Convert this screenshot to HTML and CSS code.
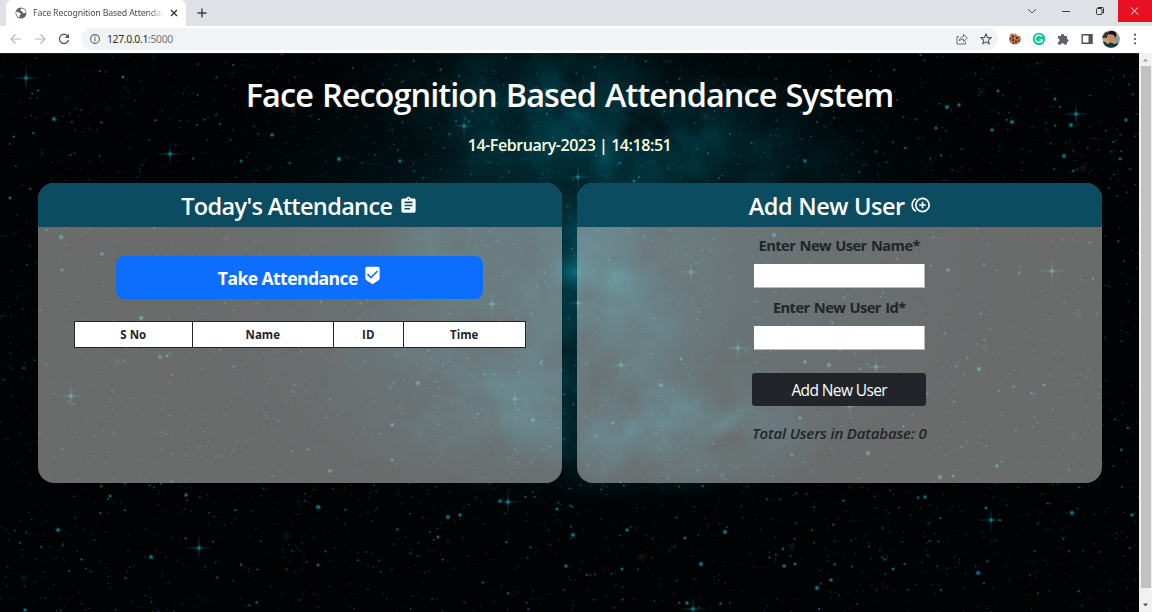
FILE: index.html
```html
<!DOCTYPE html>
<html lang="en">
<head>
<meta charset="utf-8">
<title>Face Recognition Based Attendance System</title>
<link rel="stylesheet" href="styles.css">
</head>
<body>
<div class="browser">
  <div class="tabstrip">
    <div class="tab">
      <svg class="globe" viewBox="0 0 24 24"><circle cx="12" cy="12" r="11" fill="#5f6368"/><path fill="#fff" d="M3 9c3 0 4 3 7 3s2 3 0 4 0 4-1 5C5 20 2 16 2.500 11zM13 3c-1 2-3 2-2 4s4 1 4 3 2 3 4 2 2-1 3 0c0-5-4-9-9-9z"/></svg>
      <span class="tab-title">Face Recognition Based Attendance System</span>
      <svg class="tab-close" viewBox="0 0 8 8"><path d="M1 1l6 6M7 1l-6 6" stroke="#303134" stroke-width="1.300"/></svg>
    </div>
    <svg class="new-tab" viewBox="0 0 10 10"><path d="M5 .5v9M.5 5h9" stroke="#3c4043" stroke-width="1.400"/></svg>
    <div class="window-controls">
      <svg viewBox="0 0 34 22"><path d="M12 9l4 4 4-4" fill="none" stroke="#555" /></svg>
      <svg viewBox="0 0 34 22"><path d="M12 11.500h8" stroke="#444"/></svg>
      <svg viewBox="0 0 34 22"><rect x="12.500" y="8.500" width="5.500" height="6" rx="1" fill="none" stroke="#333"/><path d="M14 8V7.500h4.500q1 0 1 1V13H18.500" fill="none" stroke="#333"/></svg>
      <svg class="close-window" viewBox="0 0 34 22"><path d="M13 7.500l7 7M20 7.500l-7 7" stroke="#fff"/></svg>
    </div>
  </div>
  <div class="toolbar">
    <div class="nav">
      <svg viewBox="0 0 12 12"><path d="M11 6H1.500M5.500 1.500L1 6l4.500 4.500" fill="none" stroke="#b4b6b9" stroke-width="1.100"/></svg>
      <svg viewBox="0 0 12 12"><path d="M1 6h9.500M6.500 1.500L11 6l-4.500 4.500" fill="none" stroke="#b4b6b9" stroke-width="1.100"/></svg>
      <svg viewBox="0 0 12 12"><path d="M10 3.500A4.600 4.600 0 1 0 10.500 7" fill="none" stroke="#505357" stroke-width="1.300"/><path d="M11 .8v4.200H6.800z" fill="#505357"/></svg>
    </div>
    <div class="omnibox">
      <svg class="info" viewBox="0 0 12 12"><circle cx="6" cy="6" r="4.400" fill="none" stroke="#5f6368" stroke-width="1.100"/><path d="M6 5.300v3M6 3.300v1.100" stroke="#5f6368" stroke-width="1.100"/></svg>
      <span class="url">127.0.0.1<span class="port">:5000</span></span>
      <svg class="share" viewBox="0 0 12 12"><path d="M3 3.500H1v7.500h8.500V8.500M3.300 8c.3-3 1.700-4.200 4.200-4.200V1.500L11.300 5 7.500 8.400V6.200C5.500 6.200 4.400 6.600 3.300 8z" fill="none" stroke="#5f6368" stroke-width=".9"/></svg>
      <svg class="star" viewBox="0 0 12 12"><path d="M6 1l1.500 3.400 3.600.3-2.700 2.400.8 3.600L6 8.800l-3.200 1.900.8-3.600L.9 4.700l3.600-.3z" fill="none" stroke="#505357" stroke-width="1.100"/></svg>
    </div>
    <div class="extensions">
      <svg viewBox="0 0 14 14"><path d="M4 1l2 1.500L8 1.500l1 2 3 .5 1 3a6 6 0 1 1-12-1L2 5l-.5-1.500z" fill="#b97549"/><g fill="#2d1b16"><circle cx="5" cy="4.500" r="1"/><circle cx="9" cy="6" r="1"/><circle cx="5" cy="8" r="1"/><circle cx="8" cy="9.500" r="1"/><circle cx="11" cy="9" r=".8"/><circle cx="2.500" cy="6.500" r=".7"/><circle cx="5.500" cy="11.300" r=".8"/></g></svg>
      <svg viewBox="0 0 14 14"><circle cx="7" cy="7" r="6.200" fill="#15c39a"/><path d="M9.800 4.600A3.600 3.600 0 1 0 10.300 8H7.500M10.300 8v2.300" fill="none" stroke="#fff" stroke-width="1.200"/></svg>
      <svg viewBox="0 0 14 14"><path d="M2 4h3a1.700 1.700 0 1 1 3.300 0H11v3a1.600 1.600 0 1 1 0 3.200V12.500H8.200a1.700 1.700 0 0 0-3.300 0H2V9.800a1.600 1.600 0 0 0 0-3.200z" fill="#5f6368"/></svg>
      <svg viewBox="0 0 14 14"><path d="M2.200 2.700h9.600v8.600H2.200z" fill="none" stroke="#505357" stroke-width="1.400"/><path d="M8.500 2h4v10h-4z" fill="#505357"/></svg>
      <svg class="avatar" viewBox="0 0 18 18"><clipPath id="face"><circle cx="9" cy="9" r="8.700"/></clipPath><g clip-path="url(#face)"><path fill="#b9a08c" d="M0 0h18v18H0z"/><path fill="#363831" d="M0 0h5v8H0z"/><path fill="#7f9c9a" d="M13 7h5v8h-5z"/><path fill="#0e3940" d="M1 12l6-1 5 3 5-1v5H1z"/><path fill="#c68a66" d="M6 5h6l1 4-2 3-3 1-2-4z"/><path fill="#171518" d="M5 7c-1-6 3-6 6-6s5 4 2 7l-1-3-6-1z"/><path fill="#df9e6b" d="M3 11l3-1 2 3-3 1z"/></g></svg>
      <svg viewBox="0 0 14 14"><g fill="#505357"><circle cx="7" cy="2.700" r="1.100"/><circle cx="7" cy="7" r="1.100"/><circle cx="7" cy="11.300" r="1.100"/></g></svg>
    </div>
  </div>
  <div class="viewport">
    <main class="page">
      <svg class="sky" id="sky" viewBox="0 0 1139 558" preserveAspectRatio="none">
        <defs>
          <radialGradient id="glow"><stop offset="0" stop-color="#0a7589"/><stop offset=".5" stop-color="#07505e" stop-opacity=".6"/><stop offset="1" stop-color="#02282f" stop-opacity="0"/></radialGradient>
          <radialGradient id="dot"><stop offset="0" stop-color="#2cb3cd"/><stop offset=".4" stop-color="#148ba3" stop-opacity=".7"/><stop offset="1" stop-color="#0a6577" stop-opacity="0"/></radialGradient>
          <filter id="cloud" x="0" y="0" width="100%" height="100%" filterUnits="userSpaceOnUse">
            <feTurbulence type="fractalNoise" baseFrequency=".016" numOctaves="6" seed="21" result="noise"/>
            <feColorMatrix in="noise" type="matrix" values="0 0 0 0 0  0 0 0 0 0  0 0 0 0 0  2 0 0 0 -.4" result="mask"/>
            <feComposite in="SourceGraphic" in2="mask" operator="in"/>
          </filter>
        </defs>
        <rect width="1139" height="558" fill="#000203"/>
        <ellipse cx="590" cy="200" rx="420" ry="290" fill="url(#glow)" opacity=".32"/>
        <g filter="url(#cloud)">
          <ellipse cx="545" cy="60" rx="190" ry="170" fill="url(#glow)" opacity=".5"/>
          <ellipse cx="690" cy="95" rx="210" ry="85" fill="url(#glow)" opacity=".45"/>
          <ellipse cx="605" cy="235" rx="140" ry="140" fill="url(#glow)" opacity=".8"/>
          <ellipse cx="640" cy="370" rx="220" ry="80" fill="url(#glow)" opacity=".8"/>
          <ellipse cx="480" cy="330" rx="180" ry="120" fill="url(#glow)" opacity=".5"/>
          <ellipse cx="455" cy="200" rx="90" ry="80" fill="url(#glow)" opacity=".5"/>
        </g>
        <ellipse cx="574" cy="218" rx="36" ry="30" fill="url(#glow)" opacity=".85"/>
        <ellipse cx="605" cy="100" rx="26" ry="50" fill="url(#glow)" opacity=".5"/>
        <ellipse cx="580" cy="62" rx="35" ry="20" fill="url(#glow)" opacity=".4" transform="rotate(35 580 62)"/>
        <ellipse cx="725" cy="370" rx="45" ry="15" fill="url(#glow)" opacity=".45" transform="rotate(-35 725 370)"/>
      </svg>
      <div class="content">
        <h1 class="title">Face Recognition Based Attendance System</h1>
        <p class="clock">14-February-2023 | 14:18:51</p>
        <div class="cards">
          <section class="card">
            <h2 class="card-head"><span class="head-today">Today's Attendance</span>
              <svg class="clip-icon" viewBox="0 0 24 24"><path fill="#fff" d="M19 3h-4.200C14.400 1.800 13.300 1 12 1s-2.400.8-2.800 2H5a2 2 0 0 0-2 2v14c0 1.100.9 2 2 2h14a2 2 0 0 0 2-2V5a2 2 0 0 0-2-2zm-7 0a1 1 0 1 1 0 2 1 1 0 0 1 0-2zm2 14H7v-2h7v2zm3-4H7v-2h10v2zm0-4H7V7h10v2z"/></svg></h2>
            <div class="card-body">
              <button class="take"><span class="take-text">Take Attendance</span>
                <svg class="check-icon" viewBox="0 0 24 24"><path fill="#fff" d="M19 1H5a2 2 0 0 0-2 2v12.900c0 .7.400 1.300.9 1.700L12 23l8.100-5.400c.5-.4.900-1 .9-1.700V3a2 2 0 0 0-2-2zm-9 15l-5-5 1.400-1.400 3.600 3.600 7.600-7.600L19 7l-9 9z"/></svg></button>
              <table class="log"><thead><tr><th class="c-no">S No</th><th class="c-name">Name</th><th class="c-id">ID</th><th class="c-time">Time</th></tr></thead></table>
            </div>
          </section>
          <section class="card">
            <h2 class="card-head"><span class="head-add">Add New User</span>
              <svg class="add-icon" viewBox="0 0 24 24"><g fill="none" stroke="#fff" stroke-width="2"><circle cx="15" cy="12" r="8"/><path d="M15 8v8M11 12h8M7 4.400A8.800 8.800 0 0 0 7 19.600"/></g></svg></h2>
            <form class="card-body form">
              <label class="label l-name" for="n">Enter New User Name*</label>
              <input class="field" id="n" type="text">
              <label class="label l-id" for="i">Enter New User Id*</label>
              <input class="field" id="i" type="text">
              <button class="submit" type="button"><span>Add New User</span></button>
              <p class="total">Total Users in Database: 0</p>
            </form>
          </section>
        </div>
      </div>
    </main>
    <div class="scrollbar">
      <svg class="arrow" viewBox="0 0 13 12"><path d="M4 8l2.500-3L9 8z" fill="#a0a0a0"/></svg>
      <div class="thumb"></div>
      <svg class="arrow-down" viewBox="0 0 13 24"><path d="M4 15.500l2.500 3 2.500-3z" fill="#505050"/></svg>
    </div>
  </div>
</div>
<script src="sky.js"></script>
</body>
</html>
```
FILE: styles.css
```css
* { box-sizing: border-box; }
body { margin: 0; background: #000; font-family: "Open Sans", "Noto Sans", sans-serif; overflow: hidden; }
h1, h2, p { margin: 0; }
svg { display: block; flex: none; }
.browser { width: 1152px; height: 612px; display: flex; flex-direction: column; }

.tabstrip { height: 26px; background: #dee1e6; display: flex; align-items: flex-start; padding-left: 6px; }
.tab { width: 180px; height: 26px; background: #fff; border-radius: 6px 6px 0 0; display: flex; align-items: center; padding: 0 8px 1px 9px; }
.globe { width: 12px; height: 12px; }
.tab-title { width: 131px; margin-left: 6px; overflow: hidden; white-space: nowrap; font-family: "Noto Sans", sans-serif; font-size: 8.8px; letter-spacing: -0.17px; color: #484b4f; -webkit-mask-image: linear-gradient(90deg, #000 88%, transparent); mask-image: linear-gradient(90deg, #000 88%, transparent); }
.tab-close { width: 8px; height: 8px; margin-left: 6px; }
.new-tab { width: 10px; height: 10px; margin: 8px 0 0 11px; }
.window-controls { margin-left: auto; display: flex; }
.window-controls svg { width: 34px; height: 22px; }
.window-controls .close-window { background: #e81123; }

.toolbar { height: 27px; background: #fff; display: flex; align-items: center; padding: 0 0 2px 10px; }
.nav { display: flex; gap: 12px; width: 71px; }
.nav svg { width: 12px; height: 12px; }
.omnibox { width: 917px; height: 22px; border-radius: 11px; background: #f1f3f4; display: flex; align-items: center; padding: 0 6px 0 8px; }
.info { width: 12px; height: 12px; }
.url { margin-left: 6px; font-family: "Noto Sans", sans-serif; font-size: 10.4px; letter-spacing: -0.33px; color: #2b2d31; }
.port { color: #73767b; }
.share { width: 12px; height: 12px; margin-left: auto; }
.star { width: 12px; height: 12px; margin-left: 12px; }
.extensions { display: flex; align-items: center; gap: 10px; margin-left: 10px; }
.extensions svg { width: 14px; height: 14px; }
.extensions .avatar { width: 18px; height: 18px; margin: 0 -2px 0 -2px; }

.viewport { flex: 1; display: flex; min-height: 0; }
.page { width: 1139px; display: grid; overflow: hidden; border-top: 1px solid #1b1c1e; }
.sky, .content { grid-area: 1 / 1; }
.sky { width: 1139px; height: 558px; }
.content { z-index: 1; display: flex; flex-direction: column; align-items: center; white-space: nowrap; }
.title { height: 44px; margin-top: 19px; line-height: 44px; font-size: 32.5px; font-weight: 600; letter-spacing: -0.98px; word-spacing: 1.6px; color: #fff; }
.clock { height: 24px; margin-top: 16px; line-height: 24px; font-size: 16px; font-weight: 600; letter-spacing: -0.44px; color: #ffffe0; }
.cards { display: flex; gap: 15px; width: 1064px; margin-top: 26px; }
.card { flex: 1; height: 300px; border-radius: 16px; overflow: hidden; background: rgba(211, 211, 211, .5); }
.card-head { height: 44px; padding-top: 2px; background: #0b4c61; color: #fff; display: flex; align-items: center; justify-content: center; font-size: 23.5px; font-weight: 600; line-height: 42px; }
.head-today { letter-spacing: -0.64px; }
.head-add { letter-spacing: -0.48px; word-spacing: 0.5px; }
.clip-icon { width: 19px; height: 19px; margin: -2px 0 0 7px; }
.add-icon { width: 20px; height: 20px; margin: -2px 0 0 5px; }
.card-body { display: flex; flex-direction: column; align-items: center; }
.take { width: 367px; height: 43px; margin-top: 29px; border: 0; border-radius: 8px; background: #0d6efd; color: #fff; font: 700 17.5px "Open Sans", sans-serif; display: flex; align-items: center; justify-content: center; padding: 1px 0 0; }
.take-text { letter-spacing: -0.54px; }
.check-icon { width: 19px; height: 19px; margin: -6px 0 0 5px; }
.log { width: 452px; height: 27px; margin-top: 22px; border-collapse: collapse; table-layout: fixed; background: #fff; }
.log th { border: 1px solid #212529; padding: 1px 0 0; font-size: 11.5px; line-height: 24px; color: #212529; }
.c-no { width: 118px; }
.c-name { width: 141px; }
.c-id { width: 70px; }
.label { height: 24px; line-height: 24px; font-size: 14.7px; font-weight: 700; letter-spacing: -0.58px; word-spacing: 1px; color: #212529; }
.l-name { margin-top: 6px; }
.l-id { margin-top: 7px; }
.field { width: 171px; height: 24px; margin: 7px 0 0 1px; padding: 0; border: 1px solid #b9bcbd; border-width: 0 1px 1px 0; background: #fff; }
.field + .submit { margin-top: 23px; }
.submit { width: 174px; height: 33px; border: 0; border-radius: 3px; background: #212529; color: #fff; font: 400 15.5px "Open Sans", sans-serif; letter-spacing: -0.6px; padding: 0; }
.total { height: 24px; line-height: 24px; margin-top: 15px; font-size: 15px; font-weight: 600; font-style: italic; letter-spacing: -0.16px; color: #212529; }

.scrollbar { width: 13px; background: #f1f1f1; display: flex; flex-direction: column; align-items: center; }
.arrow { width: 13px; height: 13px; }
.thumb { width: 10px; flex: 1; background: #c1c1c1; }
.arrow-down { width: 13px; height: 24px; }
```
FILE: sky.js
```js
const NS = "http://www.w3.org/2000/svg";
const sky = document.getElementById("sky");
function add(name, attrs) {
  const el = document.createElementNS(NS, name);
  for (const k in attrs) el.setAttribute(k, attrs[k]);
  sky.appendChild(el);
}
// Repeatable pseudo-random sequence, so the dust is the same on every load.
let seed = 20230214;
function rnd() {
  seed = (seed * 1664525 + 1013904223) % 4294967296;
  return seed / 4294967296;
}
for (let i = 0; i < 4600; i++) {
  const b = rnd();
  add("circle", { cx: (rnd() * 1139).toFixed(1), cy: (rnd() * 558).toFixed(1), r: (0.55 + b * b * b * b * 0.8).toFixed(2), fill: "#1791a8", opacity: (0.18 + rnd() * 0.45).toFixed(2) });
}
// Bright stars: x, y pairs.
const stars = [123,23,54,65,272,81,241,107,339,105,400,107,10,144,61,183,102,200,62,216,141,264,160,303,167,302,318,453,186,441,557,455,448,463,460,461,438,483,58,476,500,447,318,511,151,503,25,556,110,442,418,329,392,371,392,406,533,366,330,417,541,309,573,481,566,512,936,74,947,53,959,51,1055,45,1071,71,992,76,998,37,1012,68,1126,66,1120,105,1064,102,805,107,634,127,774,181,948,216,1044,331,829,311,805,308,681,305,661,331,800,364,792,401,868,399,997,412,953,422,940,423,925,443,986,454,1072,459,1132,461,685,484,701,510,784,512,795,510,817,534,831,526,622,515,725,478,627,476,893,515,978,519,687,549,613,369,979,315];
for (let i = 0; i < stars.length; i += 2) {
  add("circle", { cx: stars[i], cy: stars[i + 1], r: 2.3 + (i % 3) * 0.5, fill: "url(#dot)", opacity: 0.85 });
}
// Stars with diffraction spikes.
const sparkles = [26,24,170,100,464,72,71,342,515,345,492,250,199,494,508,448,691,218,738,294,621,311,1052,217,876,313,1076,60,991,466,850,352,693,555,578,123,578,249];
for (let i = 0; i < sparkles.length; i += 2) {
  const x = sparkles[i], y = sparkles[i + 1];
  add("ellipse", { cx: x, cy: y, rx: 18, ry: 0.9, fill: "url(#dot)", opacity: 0.55 });
  add("ellipse", { cx: x, cy: y, rx: 0.9, ry: 18, fill: "url(#dot)", opacity: 0.55 });
  add("circle", { cx: x, cy: y, r: 3.5, fill: "url(#dot)", opacity: 0.7 });
}
// Faint reddish smudges.
const smudges = [24,524,287,482,293,56,226,185,118,308,981,38,1083,114,792,493,642,503,1078,261,985,294,1073,382,706,62];
for (let i = 0; i < smudges.length; i += 2) {
  add("circle", { cx: smudges[i], cy: smudges[i + 1], r: 4.5, fill: "#706468", opacity: 0.07 });
  add("circle", { cx: smudges[i], cy: smudges[i + 1], r: 2, fill: "#706468", opacity: 0.12 });
}
```
